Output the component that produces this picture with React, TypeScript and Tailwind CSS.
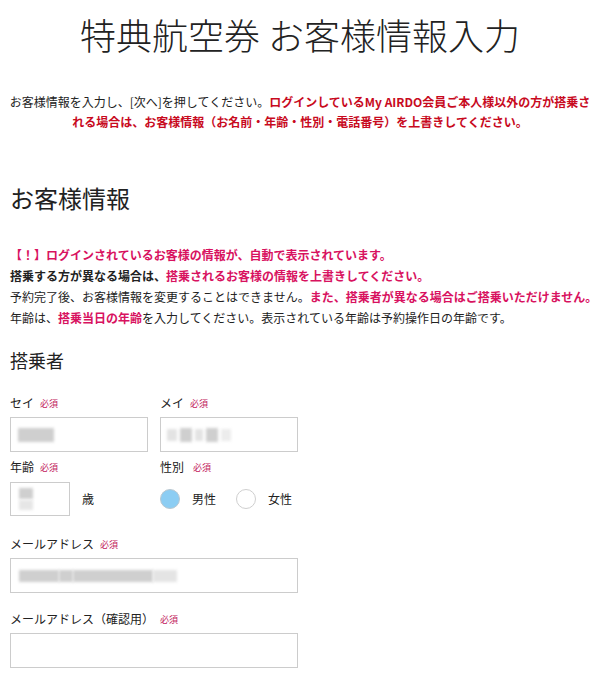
import React from "react";

const RED = "text-[#c80a1e]";
const PINK = "text-[#d8125f]";

function Required() {
  return <span className="ml-[6px] text-[9px] leading-none text-[#c2185b]">必須</span>;
}

function FieldLabel({ children }: { children: React.ReactNode }) {
  return (
    <div className="flex h-[16px] items-center text-[12px] leading-[16px] text-[#222]">
      <span>{children}</span>
      <Required />
    </div>
  );
}

function Blur({ className }: { className: string }) {
  return <span className={`block bg-[#cfcfcf] blur-[1.5px] ${className}`} />;
}

function TextBox({
  width,
  height = "h-[35px]",
  children,
}: {
  width: string;
  height?: string;
  children?: React.ReactNode;
}) {
  return (
    <div className={`relative border border-[#cccccc] bg-white ${width} ${height}`}>
      {children}
    </div>
  );
}

function Radio({ checked, label }: { checked?: boolean; label: string }) {
  return (
    <label className="flex items-center gap-[12px] text-[12px] text-[#222]">
      <span
        className={`h-[20px] w-[20px] rounded-full border ${
          checked ? "border-[#b9c7d0] bg-[#8ccdf3]" : "border-[#cfcfcf] bg-white"
        }`}
      />
      <span>{label}</span>
    </label>
  );
}

export default function App() {
  return (
    <div
      className="min-h-[695px] w-[600px] bg-white px-[10px] text-[#222]"
      style={{ fontFamily: '"Noto Sans CJK JP", "Noto Sans", sans-serif' }}
    >
      <h1 className="pt-[10px] text-center text-[36px] font-light leading-[48px] text-[#222]">
        特典航空券 お客様情報入力
      </h1>

      <div className="mt-[34px] flex flex-col items-center text-[12px] leading-[20px] text-[#222]">
        <p className="whitespace-nowrap">
          お客様情報を入力し、[次へ]を押してください。
          <span className={`font-bold ${RED}`}>ログインしているMy AIRDO会員ご本人様以外の方が搭乗さ</span>
        </p>
        <p className={`whitespace-nowrap font-bold ${RED}`}>
          れる場合は、お客様情報（お名前・年齢・性別・電話番号）を上書きしてください。
        </p>
      </div>

      <h2 className="mt-[50px] text-[24px] leading-[32px] text-[#222]">お客様情報</h2>

      <div className="mt-[30px] text-[12px] leading-[21px] text-[#222]">
        <p className={`font-bold ${PINK}`}>【！】ログインされているお客様の情報が、自動で表示されています。</p>
        <p className="font-bold">
          搭乗する方が異なる場合は、<span className={PINK}>搭乗されるお客様の情報を上書きしてください。</span>
        </p>
        <p className="whitespace-nowrap">
          予約完了後、お客様情報を変更することはできません。
          <span className={`font-bold ${PINK}`}>また、搭乗者が異なる場合はご搭乗いただけません。</span>
        </p>
        <p>
          年齢は、<span className={`font-bold ${PINK}`}>搭乗当日の年齢</span>
          を入力してください。表示されている年齢は予約操作日の年齢です。
        </p>
      </div>

      <h3 className="mt-[20px] text-[18px] leading-[24px] text-[#222]">搭乗者</h3>

      <div className="mt-[23px] flex gap-[12px]">
        <div className="flex flex-col gap-[6px]">
          <FieldLabel>セイ</FieldLabel>
          <TextBox width="w-[138px]">
            <div className="flex h-full items-center pl-[7px]">
              <Blur className="h-[14px] w-[36px]" />
            </div>
          </TextBox>
        </div>
        <div className="flex flex-col gap-[6px]">
          <FieldLabel>メイ</FieldLabel>
          <TextBox width="w-[138px]">
            <div className="flex h-full items-center gap-[3px] pl-[6px]">
              <Blur className="h-[12px] w-[10px] bg-[#e3e3e3]" />
              <Blur className="h-[14px] w-[12px]" />
              <Blur className="h-[12px] w-[8px] bg-[#e3e3e3]" />
              <Blur className="h-[14px] w-[12px]" />
              <Blur className="h-[12px] w-[10px] bg-[#ececec]" />
            </div>
          </TextBox>
        </div>
      </div>

      <div className="mt-[7px] flex gap-[12px]">
        <div className="flex w-[138px] flex-col gap-[7px]">
          <FieldLabel>年齢</FieldLabel>
          <div className="flex items-center gap-[12px]">
            <TextBox width="w-[60px]" height="h-[34px]">
              <div className="flex h-full flex-col justify-center gap-[1px] pl-[8px]">
                <Blur className="h-[11px] w-[14px]" />
                <Blur className="h-[10px] w-[14px] bg-[#e6e6e6]" />
              </div>
            </TextBox>
            <span className="text-[12px]">歳</span>
          </div>
        </div>
        <div className="flex flex-col gap-[7px]">
          <div className="flex h-[16px] items-center text-[12px] leading-[16px]">
            <span>性別</span>
            <span className="ml-[9px] text-[9px] leading-none text-[#c2185b]">必須</span>
          </div>
          <div className="flex h-[34px] items-center gap-[20px]">
            <Radio checked label="男性" />
            <Radio label="女性" />
          </div>
        </div>
      </div>

      <div className="mt-[20px] flex flex-col gap-[6px]">
        <FieldLabel>メールアドレス</FieldLabel>
        <TextBox width="w-[288px]">
          <div className="flex h-full items-center pl-[8px]">
            <Blur className="h-[12px] w-[40px]" />
            <Blur className="h-[12px] w-[14px] bg-[#b8b8b8]" />
            <Blur className="h-[12px] w-[80px]" />
            <Blur className="h-[12px] w-[24px] bg-[#e4e4e4]" />
          </div>
        </TextBox>
      </div>

      <div className="mt-[18px] flex flex-col gap-[6px]">
        <FieldLabel>メールアドレス（確認用）</FieldLabel>
        <TextBox width="w-[288px]" />
      </div>
    </div>
  );
}
